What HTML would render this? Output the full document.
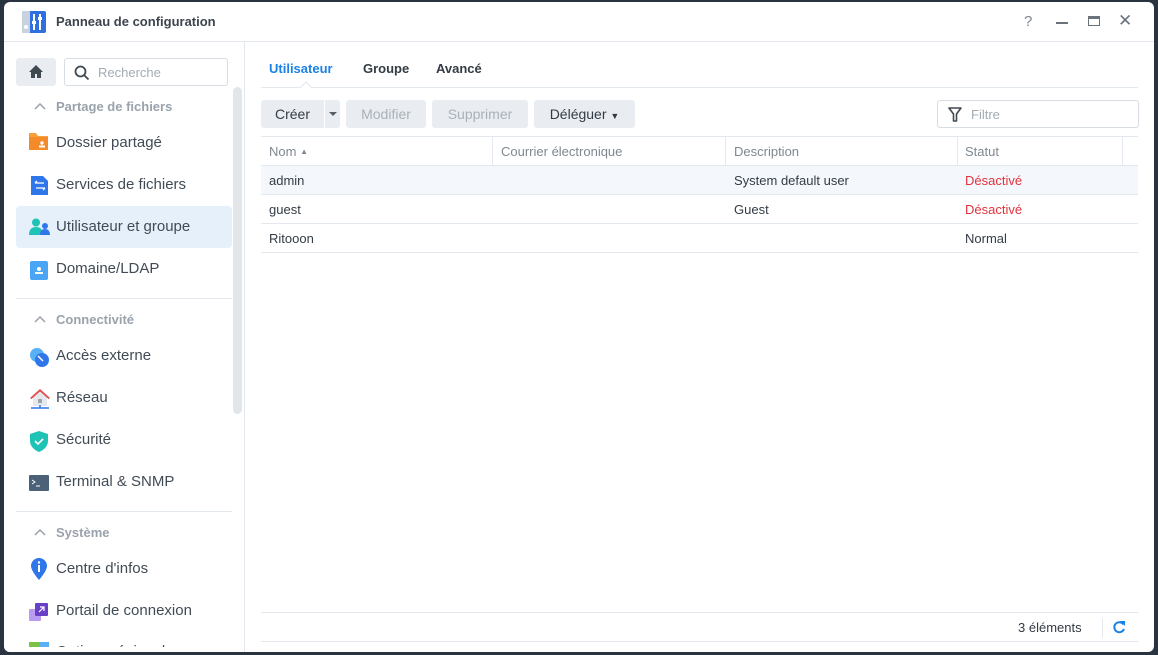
<!DOCTYPE html>
<html><head><meta charset="utf-8"><style>
*{box-sizing:border-box;margin:0;padding:0}
body{width:1158px;height:655px;overflow:hidden;background:#2a3440;font-family:"Liberation Sans",sans-serif;position:relative}
.win{position:absolute;left:4px;top:2px;width:1150px;height:650px;background:#fff;border-radius:6px;overflow:hidden}
.abs{position:absolute}
.t{position:absolute;white-space:nowrap}
.side{color:#414b55;font-size:15px}
.hdr{color:#9aa2ab;font-size:13px;font-weight:bold}
.btn{position:absolute;top:98px;height:28px;background:#e9edf1;border-radius:3px;font-size:14px;line-height:28px;text-align:center;color:#333b44}
.dis{color:#a9b0b8}
.cell{position:absolute;font-size:13px;color:#333b44;white-space:nowrap}
.hl{position:absolute;height:1px;background:#e3e8ee}
.vl{position:absolute;width:1px;background:#e3e8ee}
</style></head><body>
<div class="win">
<svg class="abs" style="left:18px;top:9px" width="24" height="22"><rect x="0" y="0" width="24" height="22" rx="2" fill="#2f6fe0"/><rect x="0" y="0" width="8" height="22" fill="#c9d3e0"/><circle cx="4" cy="16" r="2" fill="#fff"/><rect x="11" y="3" width="2" height="16" fill="#fff"/><rect x="17" y="3" width="2" height="16" fill="#fff"/><rect x="10" y="10" width="4" height="3" fill="#fff"/><rect x="16" y="6" width="4" height="3" fill="#fff"/></svg>
<div class="t" style="left:52px;top:12px;font-size:13px;font-weight:bold;color:#3c444d">Panneau de configuration</div>
<div class="t" style="left:1020px;top:11px;font-size:15px;color:#7c858e">?</div>
<div class="abs" style="left:1052px;top:20px;width:12px;height:2px;background:#6a737c"></div>
<div class="abs" style="left:1084px;top:14px;width:12px;height:10px;border:1.5px solid #6a737c;border-top-width:3px"></div>
<div class="t" style="left:1114px;top:9px;font-size:17px;color:#6a737c">✕</div>
<div class="hl" style="left:0;top:39px;width:1150px"></div>
<div class="vl" style="left:240px;top:40px;height:610px"></div>
<div class="abs" style="left:12px;top:56px;width:40px;height:28px;background:#e9edf1;border-radius:3px"></div>
<svg class="abs" style="left:24px;top:62px" width="16" height="15"><path d="M8 1L1 8h2v6h4v-4h2v4h4V8h2z" fill="#404850"/></svg>
<div class="abs" style="left:60px;top:56px;width:164px;height:28px;border:1px solid #d8dde3;border-radius:3px"></div>
<svg class="abs" style="left:70px;top:63px" width="16" height="16"><circle cx="6.5" cy="6.5" r="5" stroke="#404850" stroke-width="1.8" fill="none"/><path d="M10 10l4.5 4.5" stroke="#404850" stroke-width="1.8"/></svg>
<div class="t" style="left:94px;top:63px;font-size:13px;color:#a3abb3">Recherche</div>
<div class="abs" style="left:229px;top:85px;width:9px;height:327px;background:#e3e6e9;border-radius:5px"></div>

<svg class="abs" style="left:30px;top:101px" width="12" height="7"><path d="M1 6l5-5 5 5" stroke="#9aa2ab" stroke-width="1.5" fill="none"/></svg>
<div class="t hdr" style="left:52px;top:97px">Partage de fichiers</div>
<svg class="abs" style="left:25px;top:130px" width="20" height="19"><path d="M0 1h7l2 3h10v14H0z" fill="#f6a13a"/><path d="M0 5h19v13H0z" fill="#f48a2a"/><circle cx="13" cy="11" r="1.7" fill="#fff"/><rect x="10" y="13.5" width="6" height="2" fill="#fff"/></svg>
<div class="t side" style="left:52px;top:132px">Dossier partagé</div>
<svg class="abs" style="left:27px;top:174px" width="18" height="19"><path d="M0 0h12l5 5v14H0z" fill="#2f76ea"/><path d="M4 7h9M4 7l2-2M14 12H5M14 12l-2 2" stroke="#fff" stroke-width="1.3" fill="none"/></svg>
<div class="t side" style="left:52px;top:174px">Services de fichiers</div>
<div class="abs" style="left:12px;top:204px;width:216px;height:42px;background:#e6f0fb;border-radius:4px"></div>
<svg class="abs" style="left:25px;top:216px" width="22" height="18"><circle cx="7" cy="4.5" r="4" fill="#1ec3b6"/><path d="M0 17c0-6 3-8 7-8s7 2 7 8z" fill="#1ec3b6"/><circle cx="16" cy="8" r="3" fill="#2f76ea"/><path d="M11 17c0-4 2-6 5-6s5 2 5 6z" fill="#2f76ea"/></svg>
<div class="t side" style="left:52px;top:216px">Utilisateur et groupe</div>
<svg class="abs" style="left:25px;top:259px" width="20" height="19"><rect x="1" y="0" width="18" height="19" rx="2" fill="#4aa6f5"/><circle cx="10" cy="8" r="2" fill="#fff"/><rect x="6" y="11" width="8" height="2" fill="#fff"/></svg>
<div class="t side" style="left:52px;top:258px">Domaine/LDAP</div>
<div class="hl" style="left:12px;top:296px;width:216px"></div>

<svg class="abs" style="left:30px;top:314px" width="12" height="7"><path d="M1 6l5-5 5 5" stroke="#9aa2ab" stroke-width="1.5" fill="none"/></svg>
<div class="t hdr" style="left:52px;top:310px">Connectivité</div>
<svg class="abs" style="left:25px;top:345px" width="22" height="22"><circle cx="8" cy="8" r="7" fill="#5ab0f5"/><circle cx="13" cy="13" r="7" fill="#2f76ea"/><path d="M9 9l5 5" stroke="#fff" stroke-width="1.5"/></svg>
<div class="t side" style="left:52px;top:345px">Accès externe</div>
<svg class="abs" style="left:25px;top:386px" width="22" height="22"><path d="M11 1L1 10h3v8h14v-8h3z" fill="#e6e9ec"/><path d="M11 1L1 10l1.5 1L11 3.5 19.5 11 21 10z" fill="#e24c4c"/><rect x="9" y="11" width="4" height="4" fill="#9aa4ae"/><path d="M2 20h18M11 17v3" stroke="#2f76ea" stroke-width="1.5"/></svg>
<div class="t side" style="left:52px;top:387px">Réseau</div>
<svg class="abs" style="left:26px;top:429px" width="18" height="21"><path d="M9 0L0 3v7c0 5 4 9 9 11 5-2 9-6 9-11V3z" fill="#1ec3b6"/><path d="M5 10l3 3 5-5" stroke="#fff" stroke-width="1.6" fill="none"/></svg>
<div class="t side" style="left:52px;top:429px">Sécurité</div>
<svg class="abs" style="left:25px;top:473px" width="20" height="16"><rect width="20" height="16" rx="1" fill="#4a6178"/><path d="M3 5l3 2-3 2M7 11h4" stroke="#fff" stroke-width="1" fill="none"/></svg>
<div class="t side" style="left:52px;top:471px">Terminal &amp; SNMP</div>
<div class="hl" style="left:12px;top:509px;width:216px"></div>

<svg class="abs" style="left:30px;top:527px" width="12" height="7"><path d="M1 6l5-5 5 5" stroke="#9aa2ab" stroke-width="1.5" fill="none"/></svg>
<div class="t hdr" style="left:52px;top:523px">Système</div>
<svg class="abs" style="left:27px;top:556px" width="16" height="22"><path d="M8 0a8 8 0 0 1 8 8c0 5-8 14-8 14S0 13 0 8a8 8 0 0 1 8-8z" fill="#2f76ea"/><rect x="7" y="7" width="2" height="7" fill="#fff"/><circle cx="8" cy="4.5" r="1.2" fill="#fff"/></svg>
<div class="t side" style="left:52px;top:558px">Centre d'infos</div>
<svg class="abs" style="left:25px;top:600px" width="20" height="20"><rect x="0" y="7" width="12" height="12" rx="1" fill="#b99cf0"/><rect x="6" y="1" width="13" height="13" rx="1" fill="#6a3fc7"/><path d="M10 10l5-5M11 5h4v4" stroke="#fff" stroke-width="1.2" fill="none"/></svg>
<div class="t side" style="left:52px;top:600px">Portail de connexion</div>
<svg class="abs" style="left:25px;top:640px" width="20" height="8"><rect width="10" height="8" fill="#7cc245"/><rect x="10" width="10" height="8" fill="#5ab0f5"/></svg>
<div class="t side" style="left:52px;top:641px">Options régionales</div>
<div class="abs" style="left:0;top:645px;width:240px;height:5px;background:#fff"></div>

<div class="t" style="left:265px;top:59px;font-size:13px;font-weight:bold;color:#1a82e6">Utilisateur</div>
<div class="t" style="left:359px;top:59px;font-size:13px;font-weight:bold;color:#333b44">Groupe</div>
<div class="t" style="left:432px;top:59px;font-size:13px;font-weight:bold;color:#333b44">Avancé</div>
<div class="hl" style="left:257px;top:85px;width:877px"></div>
<svg class="abs" style="left:296px;top:79px" width="12" height="7"><path d="M0 7L6 1 12 7" fill="#fff" stroke="#e3e8ee"/></svg>

<div class="btn" style="left:257px;width:79px;text-align:left;padding-left:14px">Créer</div>
<div class="abs" style="left:320px;top:98px;width:1px;height:28px;background:#fff"></div>
<svg class="abs" style="left:325px;top:110px" width="8" height="5"><path d="M0 0h8L4 4z" fill="#555e67"/></svg>
<div class="btn dis" style="left:342px;width:80px">Modifier</div>
<div class="btn dis" style="left:428px;width:96px">Supprimer</div>
<div class="btn" style="left:530px;width:101px">Déléguer <span style="font-size:9px">▼</span></div>
<div class="abs" style="left:933px;top:98px;width:202px;height:28px;border:1px solid #d8dde3;border-radius:3px"></div>
<svg class="abs" style="left:944px;top:105px" width="14" height="15"><path d="M1 1h12L8.5 7v7h-3V7z" fill="none" stroke="#404850" stroke-width="1.6" stroke-linejoin="round"/></svg>
<div class="t" style="left:967px;top:105px;font-size:13px;color:#a3abb3">Filtre</div>

<div class="hl" style="left:257px;top:134px;width:877px"></div>
<div class="abs" style="left:257px;top:164px;width:877px;height:28px;background:#f4f8fc"></div>
<div class="hl" style="left:257px;top:163px;width:877px"></div>
<div class="vl" style="left:488px;top:134px;height:29px"></div>
<div class="vl" style="left:721px;top:134px;height:29px"></div>
<div class="vl" style="left:953px;top:134px;height:29px"></div>
<div class="vl" style="left:1118px;top:134px;height:29px"></div>
<div class="cell" style="left:265px;top:142px;color:#7f8891">Nom <span style="font-size:8px;vertical-align:2px">▲</span></div>
<div class="cell" style="left:497px;top:142px;color:#7f8891">Courrier électronique</div>
<div class="cell" style="left:730px;top:142px;color:#7f8891">Description</div>
<div class="cell" style="left:961px;top:142px;color:#7f8891">Statut</div>
<div class="hl" style="left:257px;top:192px;width:877px"></div>
<div class="hl" style="left:257px;top:221px;width:877px"></div>
<div class="hl" style="left:257px;top:250px;width:877px"></div>
<div class="cell" style="left:265px;top:171px">admin</div>
<div class="cell" style="left:730px;top:171px">System default user</div>
<div class="cell" style="left:961px;top:171px;color:#e3333d">Désactivé</div>
<div class="cell" style="left:265px;top:200px">guest</div>
<div class="cell" style="left:730px;top:200px">Guest</div>
<div class="cell" style="left:961px;top:200px;color:#e3333d">Désactivé</div>
<div class="cell" style="left:265px;top:229px">Ritooon</div>
<div class="cell" style="left:961px;top:229px">Normal</div>

<div class="hl" style="left:257px;top:610px;width:877px"></div>
<div class="hl" style="left:257px;top:639px;width:877px"></div>
<div class="cell" style="left:1014px;top:618px">3 éléments</div>
<div class="vl" style="left:1098px;top:616px;height:20px"></div>
<svg class="abs" style="left:1108px;top:618px" width="14" height="14"><path d="M11.5 4.5A5 5 0 1 0 12 9" fill="none" stroke="#1a82e6" stroke-width="2"/><path d="M8 1h5v5z" fill="#1a82e6"/></svg>
</div>
</body></html>
